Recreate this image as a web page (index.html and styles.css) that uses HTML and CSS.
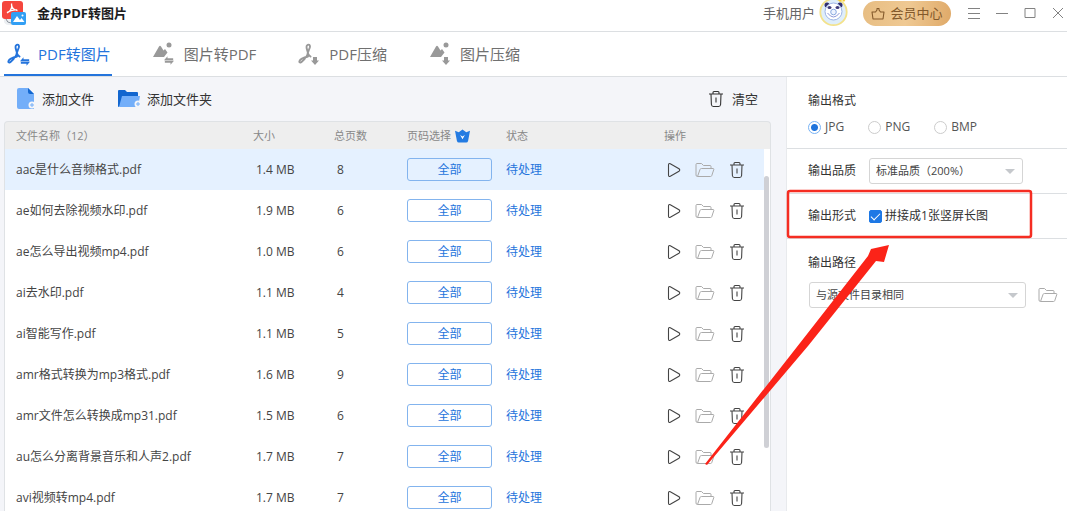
FILE: index.html
```
<!DOCTYPE html>
<html lang="zh-CN">
<head>
<meta charset="utf-8">
<title>金舟PDF转图片</title>
<link rel="stylesheet" href="styles.css">
</head>
<body>
<svg class="defs" aria-hidden="true">
  <symbol id="play" viewBox="0 0 14 16"><path d="M1.500 3v10q0 2 1.800 1.200l8.700-5q1.500-1.200 0-2.400l-8.700-5Q1.500 1 1.500 3z" fill="none" stroke="currentColor" stroke-width="1.100"/></symbol>
  <symbol id="folder" viewBox="0 0 20 16"><path d="M2.500 14.500q-1.500 0-1.500-1.500V2.500Q1 1.500 2 1.500h4.500l2 2h6.500q1 0 1 1v2M2.500 14.500l2.500-7q.3-1 1.500-1h11.500q1 0 .8 1l-2 6q-.3 1-1.300 1z" fill="none" stroke="currentColor" stroke-width="1" stroke-linejoin="round"/></symbol>
  <symbol id="trash" viewBox="0 0 16 18"><path d="M1 4h14M5 4V2.500q0-1 1-1h4q1 0 1 1V4M3 4l.4 10.500q.2 2 2 2h5.200q1.800 0 2-2L13 4M8 7.500v5" fill="none" stroke="currentColor" stroke-width="1.100"/></symbol>
  <symbol id="acrobat" viewBox="0 0 18 22"><path d="M9 2.500C7.500 4 9.500 7 9.800 9.500c.2 3-2.800 6.500-6.300 9.500-1 .9-2.500.3-2-1 .8-2 4.500-3.500 8.500-4.500M9 2.500c1.500-1.800 3.500-.5 2.800 2L9.800 10c.5 1.500 1.200 2.600 2.700 3.500" fill="none" stroke="currentColor" stroke-width="1.900" stroke-linecap="round" stroke-linejoin="round"/></symbol>
  <symbol id="swap" viewBox="0 0 12 10"><path d="M0 4.600 4.200 0v2.300H11v2.300zM12 5.400 7.800 10V7.700H1V5.400z" fill="currentColor"/></symbol>
  <symbol id="down" viewBox="0 0 8 8"><path d="M2 0h4v3.500h2L4 8 0 3.500h2z" fill="currentColor"/></symbol>
  <symbol id="hill" viewBox="0 0 16 14"><path d="M0 13 6 2.500q1-1.500 2 0L10.500 6.500 12 5l2.500 3.500L11 13z" fill="currentColor"/></symbol>
</svg>

<div class="app">
  <header class="titlebar">
    <svg class="logo" viewBox="0 0 24 26">
      <path d="M2 15v6q0 3 4 4h6V14z" fill="#eceff2"/><path d="M4 19q1 4 5 4" fill="none" stroke="#8b929c"/>
      <rect x="0" y="1" width="21" height="18" rx="3" fill="#f5463d"/>
      <path d="M5 13c3-1 5.500-5 4.500-9.500M9.500 4c0 4 3 6 6 6.500M5 12.500c3-2 6-3 10-2.500" fill="none" stroke="#fff" stroke-width="1.300"/>
      <rect x="9" y="12" width="15" height="13" rx="2" fill="#329ff4"/>
      <path d="m11 22 4-6 3 4 1.500-2 3 4z" fill="#fff"/><circle cx="20.500" cy="15.500" r="1" fill="#fff"/>
    </svg>
    <h1 class="title">金舟PDF转图片</h1>
    <span class="user">手机用户</span>
    <svg class="avatar" viewBox="0 0 30 28">
      <circle cx="14.500" cy="13" r="13.200" fill="#dfeefa" stroke="#f3e28b" stroke-width="1.800"/>
      <circle cx="8" cy="6" r="2.500" fill="#34306f"/><circle cx="21" cy="6" r="2.500" fill="#34306f"/>
      <circle cx="14.500" cy="12.500" r="8.500" fill="#fff" stroke="#9db4e4"/>
      <ellipse cx="10.500" cy="8.500" rx="2" ry="1.600" fill="#403c7b"/><ellipse cx="18.500" cy="8.500" rx="2" ry="1.600" fill="#403c7b"/>
      <circle cx="14.500" cy="13" r="2.800" fill="#edf3ff" stroke="#89a9e0"/><path d="M8.500 14q6 8 12 0" fill="none" stroke="#8c96d7"/>
      <path d="m18 0 3 3 2-2 2 2 2-3z" fill="#f4ce39"/>
    </svg>
    <button class="vip" type="button">
      <svg viewBox="0 0 14 13"><path d="M1 5h3.500L6 3V1.500h2V3l1.500 2H13l-1 7H2z" fill="none" stroke="currentColor" stroke-width="1.100" stroke-linejoin="round"/></svg>会员中心
    </button>
    <div class="window-controls">
      <button type="button" aria-label="菜单"><svg viewBox="0 0 12 12"><path d="M0 1.500h12M0 6.500h12M0 11.500h12"/></svg></button>
      <button type="button" aria-label="最小化"><svg viewBox="0 0 12 12"><path d="M0 6.500h12"/></svg></button>
      <button type="button" aria-label="最大化"><svg viewBox="0 0 12 12"><path d="M1 1.500h10v9H1z"/></svg></button>
      <button type="button" aria-label="关闭"><svg viewBox="0 0 12 12"><path d="m1 1 10 10M11 1 1 11"/></svg></button>
    </div>
  </header>

  <nav class="tabs">
    <button class="tab active" type="button"><svg viewBox="0 0 24 24"><use href="#acrobat" x="0" y="1" width="18" height="22"/><use href="#swap" x="13" y="15" width="10" height="9"/></svg>PDF转图片</button>
    <button class="tab" type="button"><svg viewBox="0 0 24 24"><use href="#hill" x="0" y="2" width="16" height="14"/><circle cx="16" cy="3" r="2.500" fill="currentColor"/><use href="#swap" x="11" y="14" width="10" height="9"/></svg>图片转PDF</button>
    <button class="tab" type="button"><svg viewBox="0 0 24 24"><use href="#acrobat" x="0" y="1" width="18" height="22"/><use href="#down" x="13" y="15" width="8" height="8"/></svg>PDF压缩</button>
    <button class="tab" type="button"><svg viewBox="0 0 24 24"><use href="#hill" x="1" y="2" width="16" height="14"/><circle cx="17" cy="3" r="2.500" fill="currentColor"/><use href="#down" x="13" y="15" width="8" height="8"/></svg>图片压缩</button>
  </nav>

  <div class="content">
    <main class="files">
      <div class="toolbar">
        <button type="button"><svg class="add-icon" viewBox="0 0 20 22"><path d="M2 0h9l6 6v15H2q-2 0-2-2V2q0-2 2-2z" fill="#73aef9"/><path d="M11 0v4q0 2 2 2h4z" fill="#1266cf"/><circle cx="15" cy="17" r="3.500" fill="#f4f5f9"/><path d="M13 17h4M15 15v4" stroke="#73aef9"/></svg>添加文件</button>
        <button type="button"><svg class="add-folder" viewBox="0 0 24 20"><path d="M0 18V2q0-1 1-1h6l2 2h10q1 0 1 1v5z" fill="#1266cf"/><path d="m1 18 3-11h18l-2 11z" fill="#73aef9"/><circle cx="20" cy="15" r="3.500" fill="#f4f5f9"/><path d="M18 15h4M20 13v4" stroke="#73aef9"/></svg>添加文件夹</button>
        <button class="clear" type="button"><svg class="trash"><use href="#trash"/></svg>清空</button>
      </div>
      <div class="list">
        <table class="table">
          <colgroup><col class="c-name"><col class="c-size"><col class="c-pages"><col class="c-range"><col class="c-state"><col class="c-actions"></colgroup>
          <thead><tr><th>文件名称（12）</th><th>大小</th><th>总页数</th><th><span class="range-head">页码选择<svg viewBox="0 0 16 14"><path d="m0 1.500 4 1.500L8 0l4 3L16 1.500 14 12q-.5 2-2 2H4q-1.500 0-2-2z" fill="#237be2"/><path d="m5.500 6 2.500 4.500L10.500 6 8 7.500z" fill="#fff"/></svg></span></th><th>状态</th><th>操作</th></tr></thead>
          <tbody id="rows"></tbody>
        </table>
        <div class="scrollbar"><div class="thumb"></div></div>
      </div>
    </main>

    <aside class="settings">
      <section class="formats">
        <h2>输出格式</h2>
        <div class="radios">
          <label><input type="radio" name="format" checked>JPG</label>
          <label><input type="radio" name="format">PNG</label>
          <label><input type="radio" name="format">BMP</label>
        </div>
      </section>
      <section class="line quality">
        <label for="quality">输出品质</label>
        <span class="select"><select id="quality"><option>标准品质（200%）</option></select></span>
      </section>
      <section class="line form">
        <h2>输出形式</h2>
        <label class="check"><input type="checkbox" checked>拼接成1张竖屏长图</label>
      </section>
      <section class="path">
        <label for="path">输出路径</label>
        <div class="path-row">
          <span class="select"><select id="path"><option>与源文件目录相同</option></select></span>
          <button type="button" aria-label="打开文件夹"><svg class="folder"><use href="#folder"/></svg></button>
        </div>
      </section>
    </aside>
  </div>
</div>
<svg class="annotation" width="1067" height="511" aria-hidden="true">
  <rect x="788" y="191" width="243" height="46" rx="2" fill="none" stroke="#f52d22" stroke-width="2.500"/>
  <path d="M705 464 800 343 868 256 871 249 889 245 884 262 876 261 808 346 707 465z" fill="#fb2318"/>
</svg>
<script src="app.js"></script>
</body>
</html>
```
FILE: styles.css
```
* { box-sizing: border-box; }
body { margin: 0; font: 12px/18px "Open Sans", "Noto Sans CJK SC", sans-serif; color: #444; background: #fff; overflow: hidden; }
button { border: 0; padding: 0; background: none; font: inherit; color: inherit; display: flex; align-items: center; }
h1, h2 { margin: 0; font: inherit; }
svg { display: block; flex: none; }
.defs { position: absolute; width: 0; height: 0; }
.app { height: 100vh; display: flex; flex-direction: column; }

.titlebar { flex: none; height: 32px; display: flex; align-items: center; padding: 0 3px 5px 2px; border-bottom: 1px solid #dcdfe2; }
.logo { width: 24px; height: 26px; }
.title { margin-left: 11px; margin-right: auto; font-size: 13px; font-weight: 700; color: #1d1d1d; }
.user { font-size: 13px; color: #666; }
.avatar { width: 30px; height: 28px; margin-left: 4px; }
.vip { width: 88px; height: 25px; margin: 0 17px 0 14px; gap: 5px; justify-content: center; border-radius: 13px; font-size: 13px; color: #83592b; background: linear-gradient(100deg, #e7bd82, #efc993 50%, #dfa968); }
.vip svg { width: 14px; height: 13px; }
.window-controls { display: flex; gap: 16px; }
.window-controls svg { width: 12px; height: 12px; fill: none; stroke: #828282; }

.tabs { flex: none; height: 45px; display: flex; gap: 38px; padding-left: 4px; border-bottom: 1px solid #dcdfe2; }
.tab { gap: 7px; padding: 2px 1px 0 3px; font-size: 15px; color: #707070; border-bottom: 2px solid transparent; }
.tab svg { width: 24px; height: 24px; color: #999; }
.tab.active, .tab.active svg { color: #2474dc; }
.tab.active { border-bottom-color: #2474dc; }

.content { flex: 1; min-height: 0; display: grid; grid-template-columns: minmax(0, 1fr) 281px; }
.files { display: flex; flex-direction: column; min-height: 0; padding: 0 15px 0 4px; background: #f4f5f9; }
.toolbar { flex: none; height: 44px; display: flex; gap: 24px; padding: 0 13px; font-size: 13px; color: #333; }
.toolbar button { gap: 5px; }
.toolbar .clear { margin-left: auto; gap: 8px; }
.add-icon { width: 20px; height: 22px; }
.add-folder { width: 24px; height: 20px; }
.list { flex: 1; min-height: 0; display: flex; overflow: hidden; border: 1px solid #dfe2e5; border-bottom: 0; border-radius: 4px 4px 0 0; background: linear-gradient(#eee 27px, #fff 27px); }
.table { flex: 1; align-self: flex-start; table-layout: fixed; border-collapse: collapse; text-align: left; }
.c-size { width: 81px; }
.c-pages { width: 73px; }
.c-range { width: 99px; }
.c-state { width: 158px; }
.c-actions { width: 100px; }
th, td { padding: 0; white-space: nowrap; }
th { height: 27px; font-size: 11px; font-weight: 400; color: #888; }
td { height: 41px; }
th:first-child, td:first-child { padding-left: 11px; }
td:nth-child(2), td:nth-child(3) { padding-left: 3px; }
.range-head { display: flex; align-items: center; gap: 4px; }
.range-head svg { width: 15px; height: 14px; }
tbody tr:first-child { background: #e5f1ff; }
.range { width: 85px; height: 23px; justify-content: center; border: 1px solid #83b4ee; border-radius: 3px; color: #2474dc; }
.state { color: #2474dc; }
.actions { display: flex; align-items: center; gap: 14px; padding-left: 3px; }
.actions button { color: #444; }
.play { width: 14px; height: 16px; }
.folder { width: 20px; height: 16px; color: #aaa; }
.trash { width: 16px; height: 18px; }
.scrollbar { width: 6px; padding-top: 54px; }
.thumb { width: 5px; height: 272px; border-radius: 3px; background: #cfd0d5; }

.settings { border-left: 1px solid #e8eaed; color: #333; }
.settings section { padding: 0 19px 0 21px; border-bottom: 1px solid #dcdfe2; }
.formats { height: 72px; }
.formats h2 { padding-top: 15px; }
.radios { display: flex; gap: 24px; margin-top: 8px; color: #555; }
.radios label, .check { display: flex; align-items: center; }
input { appearance: none; flex: none; width: 13px; height: 13px; margin: 0; border: 1px solid #ccc; background: #fff; }
input[type="radio"] { border-radius: 50%; margin-right: 4px; }
input[type="radio"]:checked { border-color: #78b3f5; background: radial-gradient(circle, #1f74dc 3px, #fff 4px); }
input[type="checkbox"] { display: grid; place-items: center; margin-right: 3px; border-color: #1d78e5; border-radius: 2px; background: #1d78e5; }
input[type="checkbox"]::before { content: ""; width: 8px; height: 4px; margin-bottom: 2px; border: solid #fff; border-width: 0 0 1px 1px; rotate: -45deg; }
.line { height: 45px; display: flex; align-items: center; gap: 13px; }
.select { position: relative; display: block; }
.select::after { content: ""; position: absolute; right: 8px; top: 11px; border: 5px solid transparent; border-top-color: #c5c8cc; border-bottom: 0; pointer-events: none; }
select { appearance: none; width: 100%; height: 26px; padding: 0 6px; border: 1px solid #d5d5d5; border-radius: 3px; background: #fff; font: inherit; font-size: 11px; color: #444; }
.quality .select { width: 154px; }
.settings .path { padding: 15px 9px 0 21px; border-bottom: 0; }
.path-row { display: flex; align-items: center; gap: 12px; margin-top: 10px; padding-left: 1px; }
.path-row .select { flex: 1; }
.annotation { position: absolute; left: 0; top: 0; pointer-events: none; }
```
FILE: app.js
```
const files = [
  ['aac是什么音频格式.pdf', '1.4 MB', 8],
  ['ae如何去除视频水印.pdf', '1.9 MB', 6],
  ['ae怎么导出视频mp4.pdf', '1.0 MB', 6],
  ['ai去水印.pdf', '1.1 MB', 4],
  ['ai智能写作.pdf', '1.1 MB', 5],
  ['amr格式转换为mp3格式.pdf', '1.6 MB', 9],
  ['amr文件怎么转换成mp31.pdf', '1.5 MB', 6],
  ['au怎么分离背景音乐和人声2.pdf', '1.7 MB', 7],
  ['avi视频转mp4.pdf', '1.7 MB', 7]
];
const icon = (name, label) => `<button type="button" aria-label="${label}"><svg class="${name}"><use href="#${name}"/></svg></button>`;
document.getElementById('rows').innerHTML = files.map(([name, size, pages]) => `
  <tr><td>${name}</td><td>${size}</td><td>${pages}</td>
  <td><button class="range" type="button">全部</button></td>
  <td class="state">待处理</td>
  <td><div class="actions">${icon('play', '开始')}${icon('folder', '打开')}${icon('trash', '删除')}</div></td></tr>`).join('');
```
